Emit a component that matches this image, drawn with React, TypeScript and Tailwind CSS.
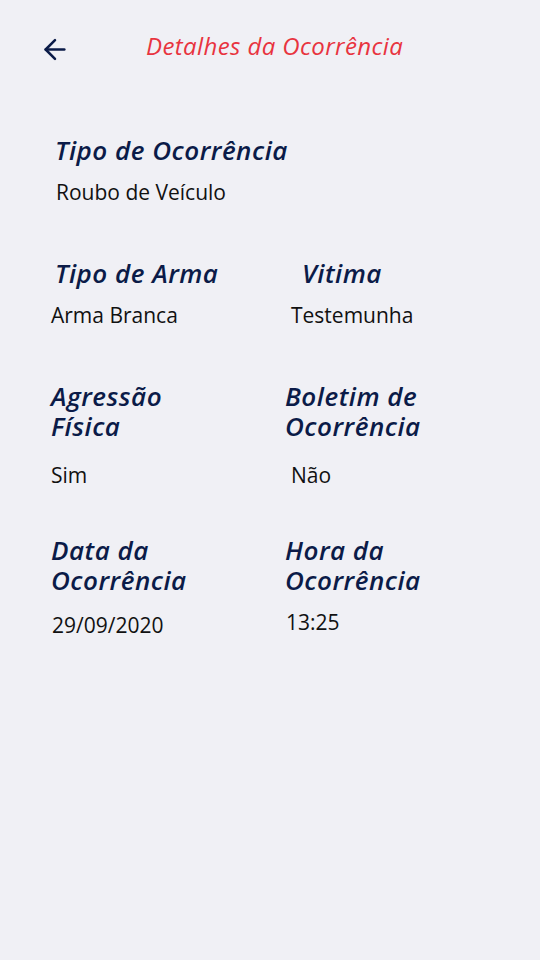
import { ArrowLeft } from 'lucide-react';

const head = "font-['Open_Sans',sans-serif] italic font-semibold text-[26px] leading-[30px] tracking-[0.5px] text-[#0b1b48]";
const val = "font-['Open_Sans',sans-serif] text-[21px] leading-[28px] text-[#111111]";

export default function App() {
  return (
    <div className="min-h-[960px] w-[540px] bg-[#f0f0f5]">
      <div className="flex items-center h-[50px] pt-[24px] box-content">
        <button className="ml-[39px] w-[32px] h-[32px] flex items-center justify-center text-[#0b1b48]">
          <ArrowLeft size={33} strokeWidth={1.9} />
        </button>
        <h1 className="ml-[75px] -mt-[6px] font-['Open_Sans',sans-serif] italic text-[24px] tracking-[0.4px] text-[#e8343f]">
          Detalhes da Ocorrência
        </h1>
      </div>

      <div className="px-[51px] pt-[61px]">
        <div className="pl-[4px]">
          <h2 className={head}>Tipo de Ocorrência</h2>
          <p className={`${val} mt-[13px] pl-[1px]`}>Roubo de Veículo</p>
        </div>

        <div className="grid grid-cols-[234px_1fr] mt-[52px]">
          <div>
            <h2 className={`${head} pl-[4px]`}>Tipo de Arma</h2>
            <p className={`${val} mt-[13px]`}>Arma Branca</p>
          </div>
          <div>
            <h2 className={`${head} pl-[17px]`}>Vitima</h2>
            <p className={`${val} mt-[13px] pl-[6px]`}>Testemunha</p>
          </div>
        </div>

        <div className="grid grid-cols-[234px_1fr] mt-[52px]">
          <div>
            <h2 className={head}>Agressão<br />Física</h2>
            <p className={`${val} mt-[20px]`}>Sim</p>
          </div>
          <div>
            <h2 className={head}>Boletim de<br />Ocorrência</h2>
            <p className={`${val} mt-[20px] pl-[6px]`}>Não</p>
          </div>
        </div>

        <div className="grid grid-cols-[234px_1fr] mt-[46px]">
          <div>
            <h2 className={head}>Data da<br />Ocorrência</h2>
            <p className={`${val} mt-[16px] pl-[1px]`}>29/09/2020</p>
          </div>
          <div>
            <h2 className={head}>Hora da<br />Ocorrência</h2>
            <p className={`${val} mt-[13px] pl-[1px]`}>13:25</p>
          </div>
        </div>
      </div>
    </div>
  );
}
